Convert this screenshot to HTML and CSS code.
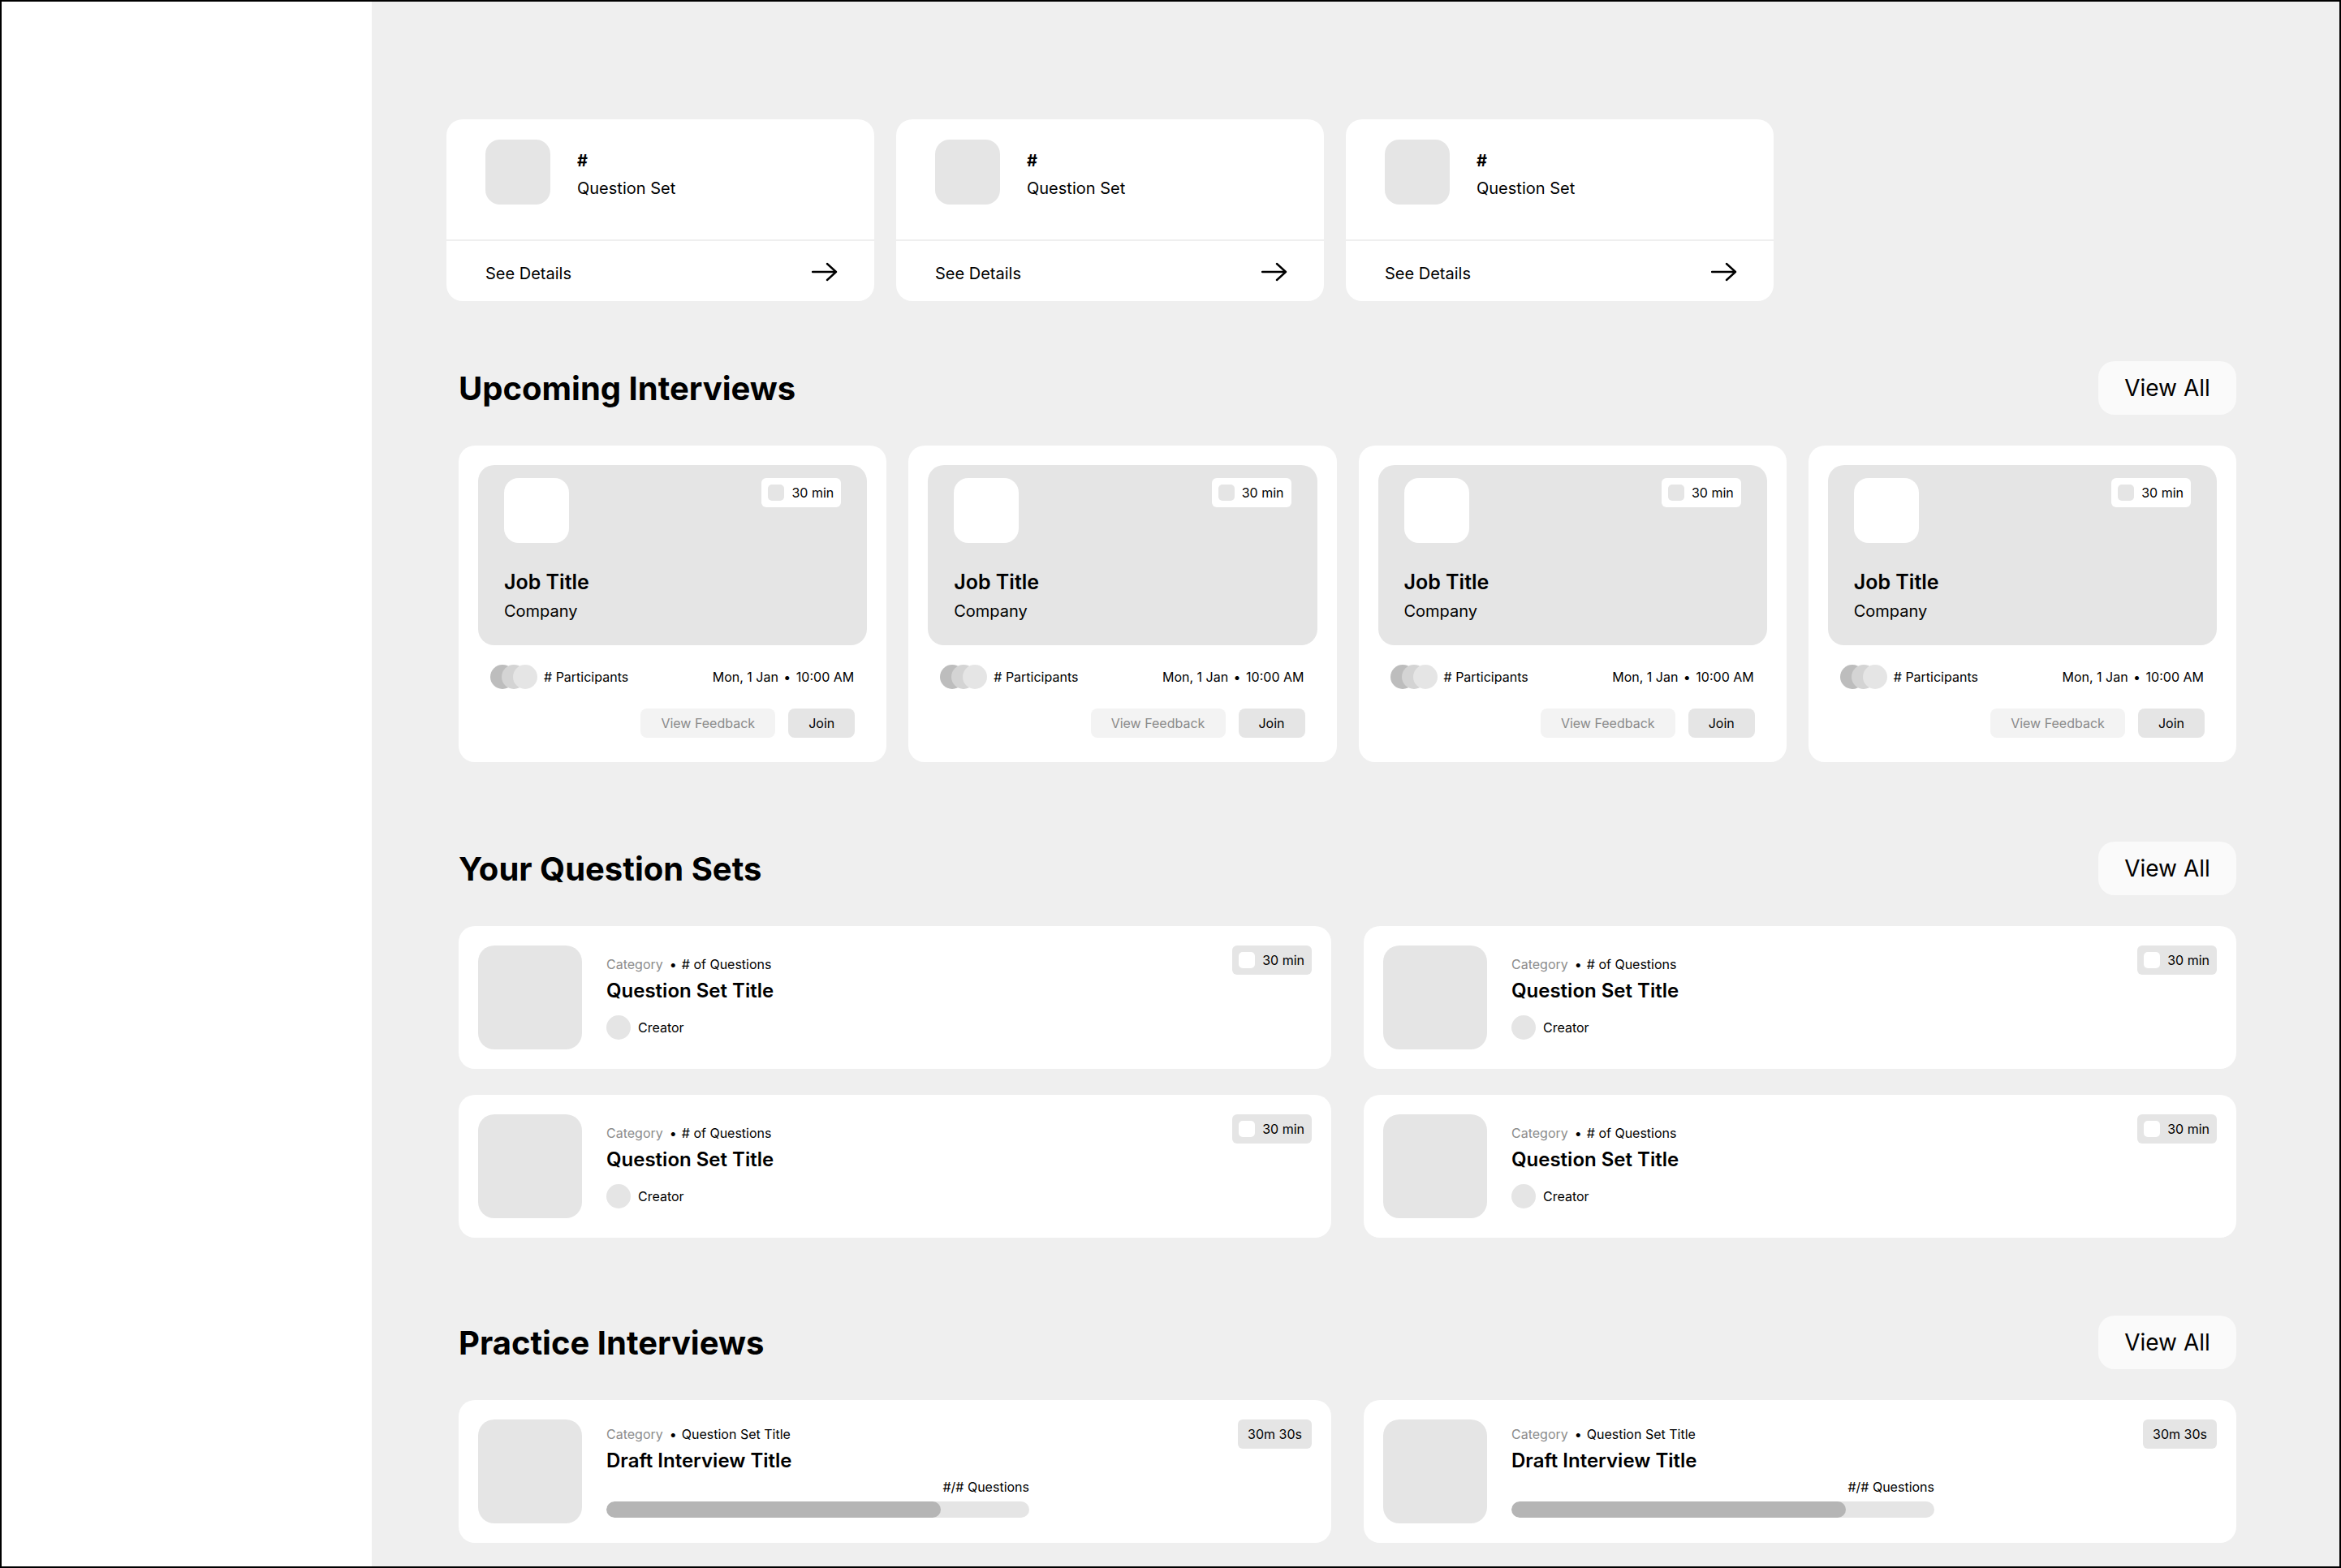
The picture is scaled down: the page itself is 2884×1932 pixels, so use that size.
FILE: index.html
```html
<!DOCTYPE html>
<html lang="en">
<head>
<meta charset="utf-8">
<title>Dashboard</title>
<link rel="stylesheet" href="styles.css">
</head>
<body>
<div class="frame">
  <aside class="sidebar"></aside>
  <main class="main">
    <div class="stats">
      <div class="stat-card">
        <div class="stat-top">
          <div class="stat-thumb"></div>
          <div class="stat-text"><div class="stat-num">#</div><div class="stat-label">Question Set</div></div>
        </div>
        <div class="stat-bottom"><span>See Details</span>
          <svg class="arrow" viewBox="0 0 32 24" width="32" height="24"><path d="M1 12h29M19 2l11 10-11 10" fill="none" stroke="#000" stroke-width="2.4" stroke-linecap="round" stroke-linejoin="round"/></svg>
        </div>
      </div>
      <div class="stat-card">
        <div class="stat-top">
          <div class="stat-thumb"></div>
          <div class="stat-text"><div class="stat-num">#</div><div class="stat-label">Question Set</div></div>
        </div>
        <div class="stat-bottom"><span>See Details</span>
          <svg class="arrow" viewBox="0 0 32 24" width="32" height="24"><path d="M1 12h29M19 2l11 10-11 10" fill="none" stroke="#000" stroke-width="2.4" stroke-linecap="round" stroke-linejoin="round"/></svg>
        </div>
      </div>
      <div class="stat-card">
        <div class="stat-top">
          <div class="stat-thumb"></div>
          <div class="stat-text"><div class="stat-num">#</div><div class="stat-label">Question Set</div></div>
        </div>
        <div class="stat-bottom"><span>See Details</span>
          <svg class="arrow" viewBox="0 0 32 24" width="32" height="24"><path d="M1 12h29M19 2l11 10-11 10" fill="none" stroke="#000" stroke-width="2.4" stroke-linecap="round" stroke-linejoin="round"/></svg>
        </div>
      </div>
    </div>

    <section class="section first">
      <div class="section-head"><h2>Upcoming Interviews</h2><button class="view-all">View All</button></div>
      <div class="grid4">
        <div class="iv-card">
          <div class="iv-hero">
            <div class="iv-hero-top"><div class="iv-logo"></div><div class="badge white"><span class="badge-ico"></span>30 min</div></div>
            <div class="iv-title">Job Title</div>
            <div class="iv-company">Company</div>
          </div>
          <div class="iv-meta">
            <div class="avatars"><span class="av a1"></span><span class="av a2"></span><span class="av a3"></span></div>
            <span class="iv-part"># Participants</span>
            <span class="iv-date">Mon, 1 Jan <span class="dot">•</span> 10:00 AM</span>
          </div>
          <div class="iv-actions"><button class="btn ghost">View Feedback</button><button class="btn join">Join</button></div>
        </div>
        <div class="iv-card">
          <div class="iv-hero">
            <div class="iv-hero-top"><div class="iv-logo"></div><div class="badge white"><span class="badge-ico"></span>30 min</div></div>
            <div class="iv-title">Job Title</div>
            <div class="iv-company">Company</div>
          </div>
          <div class="iv-meta">
            <div class="avatars"><span class="av a1"></span><span class="av a2"></span><span class="av a3"></span></div>
            <span class="iv-part"># Participants</span>
            <span class="iv-date">Mon, 1 Jan <span class="dot">•</span> 10:00 AM</span>
          </div>
          <div class="iv-actions"><button class="btn ghost">View Feedback</button><button class="btn join">Join</button></div>
        </div>
        <div class="iv-card">
          <div class="iv-hero">
            <div class="iv-hero-top"><div class="iv-logo"></div><div class="badge white"><span class="badge-ico"></span>30 min</div></div>
            <div class="iv-title">Job Title</div>
            <div class="iv-company">Company</div>
          </div>
          <div class="iv-meta">
            <div class="avatars"><span class="av a1"></span><span class="av a2"></span><span class="av a3"></span></div>
            <span class="iv-part"># Participants</span>
            <span class="iv-date">Mon, 1 Jan <span class="dot">•</span> 10:00 AM</span>
          </div>
          <div class="iv-actions"><button class="btn ghost">View Feedback</button><button class="btn join">Join</button></div>
        </div>
        <div class="iv-card">
          <div class="iv-hero">
            <div class="iv-hero-top"><div class="iv-logo"></div><div class="badge white"><span class="badge-ico"></span>30 min</div></div>
            <div class="iv-title">Job Title</div>
            <div class="iv-company">Company</div>
          </div>
          <div class="iv-meta">
            <div class="avatars"><span class="av a1"></span><span class="av a2"></span><span class="av a3"></span></div>
            <span class="iv-part"># Participants</span>
            <span class="iv-date">Mon, 1 Jan <span class="dot">•</span> 10:00 AM</span>
          </div>
          <div class="iv-actions"><button class="btn ghost">View Feedback</button><button class="btn join">Join</button></div>
        </div>
      </div>
    </section>

    <section class="section">
      <div class="section-head"><h2>Your Question Sets</h2><button class="view-all">View All</button></div>
      <div class="grid2">
        <div class="row-card">
          <div class="row-thumb"></div>
          <div class="row-body">
            <div class="row-meta"><span class="muted">Category</span><span class="dot">•</span><span># of Questions</span></div>
            <div class="row-title">Question Set Title</div>
            <div class="creator"><span class="creator-av"></span>Creator</div>
          </div>
          <div class="badge gray"><span class="badge-ico light"></span>30 min</div>
        </div>
        <div class="row-card">
          <div class="row-thumb"></div>
          <div class="row-body">
            <div class="row-meta"><span class="muted">Category</span><span class="dot">•</span><span># of Questions</span></div>
            <div class="row-title">Question Set Title</div>
            <div class="creator"><span class="creator-av"></span>Creator</div>
          </div>
          <div class="badge gray"><span class="badge-ico light"></span>30 min</div>
        </div>
        <div class="row-card">
          <div class="row-thumb"></div>
          <div class="row-body">
            <div class="row-meta"><span class="muted">Category</span><span class="dot">•</span><span># of Questions</span></div>
            <div class="row-title">Question Set Title</div>
            <div class="creator"><span class="creator-av"></span>Creator</div>
          </div>
          <div class="badge gray"><span class="badge-ico light"></span>30 min</div>
        </div>
        <div class="row-card">
          <div class="row-thumb"></div>
          <div class="row-body">
            <div class="row-meta"><span class="muted">Category</span><span class="dot">•</span><span># of Questions</span></div>
            <div class="row-title">Question Set Title</div>
            <div class="creator"><span class="creator-av"></span>Creator</div>
          </div>
          <div class="badge gray"><span class="badge-ico light"></span>30 min</div>
        </div>
      </div>
    </section>

    <section class="section last">
      <div class="section-head"><h2>Practice Interviews</h2><button class="view-all">View All</button></div>
      <div class="grid2">
        <div class="row-card">
          <div class="row-thumb"></div>
          <div class="row-body">
            <div class="row-meta"><span class="muted">Category</span><span class="dot">•</span><span>Question Set Title</span></div>
            <div class="row-title">Draft Interview Title</div>
            <div class="progress-wrap">
              <div class="progress-label">#/# Questions</div>
              <div class="progress"><div class="progress-fill" style="width:79%"></div></div>
            </div>
          </div>
          <div class="badge gray timer">30m 30s</div>
        </div>
        <div class="row-card">
          <div class="row-thumb"></div>
          <div class="row-body">
            <div class="row-meta"><span class="muted">Category</span><span class="dot">•</span><span>Question Set Title</span></div>
            <div class="row-title">Draft Interview Title</div>
            <div class="progress-wrap">
              <div class="progress-label">#/# Questions</div>
              <div class="progress"><div class="progress-fill" style="width:79%"></div></div>
            </div>
          </div>
          <div class="badge gray timer">30m 30s</div>
        </div>
      </div>
    </section>
  </main>
</div>
</body>
</html>
```

FILE: styles.css
```css
* { box-sizing: border-box; }
html, body { margin: 0; padding: 0; }
body {
  font-family: Inter, "Noto Sans", "Liberation Sans", sans-serif;
  color: #000;
}
button { font-family: inherit; border: none; cursor: pointer; }

.frame {
  width: 2884px;
  height: 1932px;
  border: 2px solid #000;
  display: flex;
  overflow: hidden;
}
.sidebar {
  width: 456px;
  flex: none;
  background: #fff;
}
.main {
  flex: 1;
  background: #efefef;
  padding: 145px 127px 0 107px;
  min-width: 0;
}

/* top stat cards */
.stats {
  display: grid;
  grid-template-columns: repeat(3, 527px);
  gap: 27px;
  margin-left: -15px;
}
.stat-card {
  background: #fff;
  border-radius: 20px;
  height: 224px;
  overflow: hidden;
}
.stat-top {
  height: 150px;
  padding: 25px 48px;
  display: flex;
  gap: 33px;
  border-bottom: 2px solid #efefef;
}
.stat-thumb {
  width: 80px;
  height: 80px;
  border-radius: 18px;
  background: #e5e5e5;
}
.stat-text { padding-top: 14px; }
.stat-num { font-size: 20px; font-weight: 700; line-height: 24px; }
.stat-label { font-size: 20px; line-height: 24px; margin-top: 10px; }
.stat-bottom {
  height: 74px;
  padding: 5px 45px 0 48px;
  display: flex;
  align-items: center;
  justify-content: space-between;
  font-size: 20px;
}
.arrow { margin-top: -3px; }

/* sections */
.section { margin-top: 98px; }
.section.first { margin-top: 74px; }
.section.last { margin-top: 96px; }
.section-head {
  display: flex;
  align-items: center;
  justify-content: space-between;
  margin-bottom: 38px;
}
.section-head h2 {
  margin: 0;
  font-size: 40px;
  font-weight: 700;
}
.view-all {
  width: 170px;
  height: 66px;
  border-radius: 20px;
  background: #fafafa;
  font-size: 28px;
  color: #000;
}

/* upcoming interview cards */
.grid4 {
  display: grid;
  grid-template-columns: repeat(4, 1fr);
  gap: 27px;
}
.iv-card {
  background: #fff;
  border-radius: 20px;
  padding: 24px 24px 30px;
}
.iv-hero {
  background: #e5e5e5;
  border-radius: 20px;
  height: 222px;
  padding: 16px 32px 0;
}
.iv-hero-top {
  display: flex;
  justify-content: space-between;
  align-items: flex-start;
}
.iv-logo {
  width: 80px;
  height: 80px;
  border-radius: 18px;
  background: #fff;
}
.iv-title {
  margin-top: 33px;
  font-size: 25px;
  font-weight: 600;
  line-height: 30px;
}
.iv-company {
  margin-top: 9px;
  font-size: 20px;
  line-height: 24px;
}
.badge {
  height: 36px;
  border-radius: 6px;
  display: flex;
  align-items: center;
  gap: 9px;
  padding: 0 9px 0 8px;
  font-size: 16px;
}
.badge.white { background: #fff; }
.badge.gray { background: #e5e5e5; }
.badge-ico {
  width: 20px;
  height: 20px;
  border-radius: 5px;
  background: #e5e5e5;
}
.badge-ico.light { background: #fff; }

.iv-meta {
  margin-top: 24px;
  height: 30px;
  padding: 0 16px 0 15px;
  display: flex;
  align-items: center;
  font-size: 16px;
}
.avatars { display: flex; width: 58px; height: 30px; }
.av {
  width: 30px;
  height: 30px;
  border-radius: 50%;
  flex: none;
}
.av + .av { margin-left: -16px; }
.a1 { background: #bdbdbd; }
.a2 { background: #d4d4d4; }
.a3 { background: #e5e5e5; }
.iv-part { margin-left: 8px; }
.iv-date { margin-left: auto; }
.iv-date .dot { margin: 0 2px; }
.iv-actions {
  margin-top: 24px;
  padding-right: 15px;
  display: flex;
  justify-content: flex-end;
  gap: 16px;
}
.btn {
  height: 36px;
  border-radius: 8px;
  font-size: 16px;
}
.btn.ghost { width: 166px; background: #f3f3f3; color: #8a8a8a; }
.btn.join { width: 82px; background: #e5e5e5; color: #000; }

/* list row cards */
.grid2 {
  display: grid;
  grid-template-columns: 1fr 1fr;
  column-gap: 40px;
  row-gap: 32px;
}
.row-card {
  background: #fff;
  border-radius: 20px;
  padding: 24px;
  display: flex;
  align-items: center;
  position: relative;
}
.row-thumb {
  width: 128px;
  height: 128px;
  border-radius: 20px;
  background: #e5e5e5;
  flex: none;
}
.row-body { margin-left: 30px; }
.row-meta {
  font-size: 16px;
  line-height: 20px;
  display: flex;
}
.row-meta .dot { margin: 0 6px 0 8px; }
.muted { color: #8c8c8c; }
.row-title {
  margin-top: 8px;
  font-size: 24px;
  font-weight: 600;
  line-height: 30px;
}
.creator {
  margin-top: 15px;
  display: flex;
  align-items: center;
  gap: 9px;
  font-size: 16px;
}
.creator-av {
  width: 30px;
  height: 30px;
  border-radius: 50%;
  background: #e5e5e5;
}
.row-card .badge {
  position: absolute;
  top: 24px;
  right: 24px;
}
.badge.timer { padding: 0 12px; }

.progress-wrap { width: 521px; margin-top: 7px; }
.progress-label {
  text-align: right;
  font-size: 16px;
  line-height: 20px;
}
.progress {
  margin-top: 8px;
  height: 20px;
  border-radius: 10px;
  background: #e5e5e5;
  overflow: hidden;
}
.progress-fill {
  height: 100%;
  background: #b5b5b5;
  border-radius: 10px;
}
```
